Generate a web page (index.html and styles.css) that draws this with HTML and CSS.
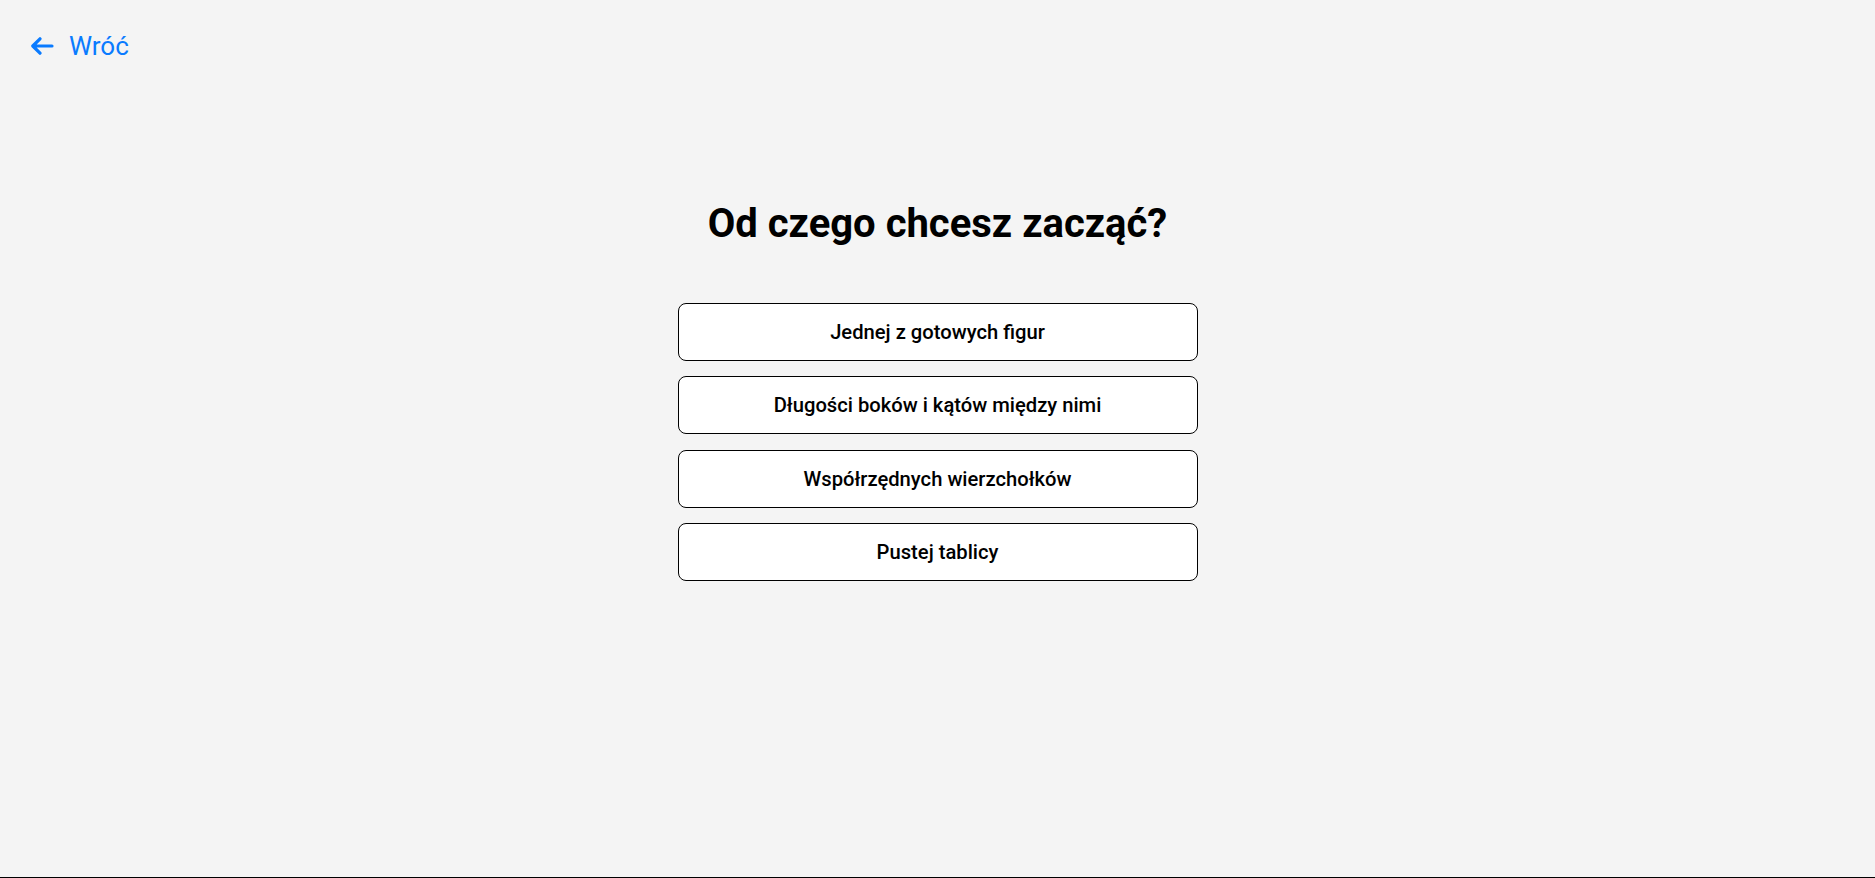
FILE: index.html
```html
<!DOCTYPE html>
<html lang="pl">
<head>
<meta charset="utf-8">
<title>Od czego chcesz zacząć?</title>
<link rel="stylesheet" href="styles.css">
</head>
<body>
<div class="page">
  <header class="topbar">
    <a class="back" href="#">
      <svg class="back-icon" width="24" height="18" viewBox="0 0 24 18" aria-hidden="true">
        <path d="M22 9H3M10 1.8L2.8 9L10 16.2" fill="none" stroke="currentColor" stroke-width="3.2" stroke-linecap="round" stroke-linejoin="round"/>
      </svg>
      <span>Wróć</span>
    </a>
  </header>
  <main class="content">
    <h1 class="title">Od czego chcesz zacząć?</h1>
    <div class="options">
      <button class="option">Jednej z gotowych figur</button>
      <button class="option">Długości boków i kątów między nimi</button>
      <button class="option">Współrzędnych wierzchołków</button>
      <button class="option">Pustej tablicy</button>
    </div>
  </main>
</div>
</body>
</html>
```

FILE: styles.css
```css
* { box-sizing: border-box; }

html, body {
  margin: 0;
  padding: 0;
  background: #f4f4f4;
  font-family: Roboto, "Liberation Sans", sans-serif;
}

.page {
  min-height: 100vh;
  border-bottom: 1px solid #000;
  display: flex;
  flex-direction: column;
}

.topbar {
  padding: 31px 0 0 30px;
  display: flex;
  height: 60px;
}

.back {
  display: flex;
  align-items: center;
  gap: 15px;
  color: #0a7bff;
  text-decoration: none;
  font-size: 26px;
  line-height: 28px;
  font-weight: 400;
}

.back-icon {
  display: block;
}

.content {
  display: flex;
  flex-direction: column;
  align-items: center;
  margin-top: 140px;
}

.title {
  margin: 0;
  font-size: 40px;
  line-height: 48px;
  font-weight: 700;
  color: #000;
}

.options {
  margin-top: 55px;
  display: flex;
  flex-direction: column;
  gap: 15.3px;
  width: 520px;
}

.option {
  height: 58px;
  background: #fff;
  border: 1px solid #000;
  border-radius: 8px;
  font-family: Roboto, "Liberation Sans", sans-serif;
  font-size: 20.2px;
  font-weight: 500;
  color: #000;
  display: flex;
  align-items: center;
  justify-content: center;
  padding: 0 16px;
  cursor: pointer;
}
```
